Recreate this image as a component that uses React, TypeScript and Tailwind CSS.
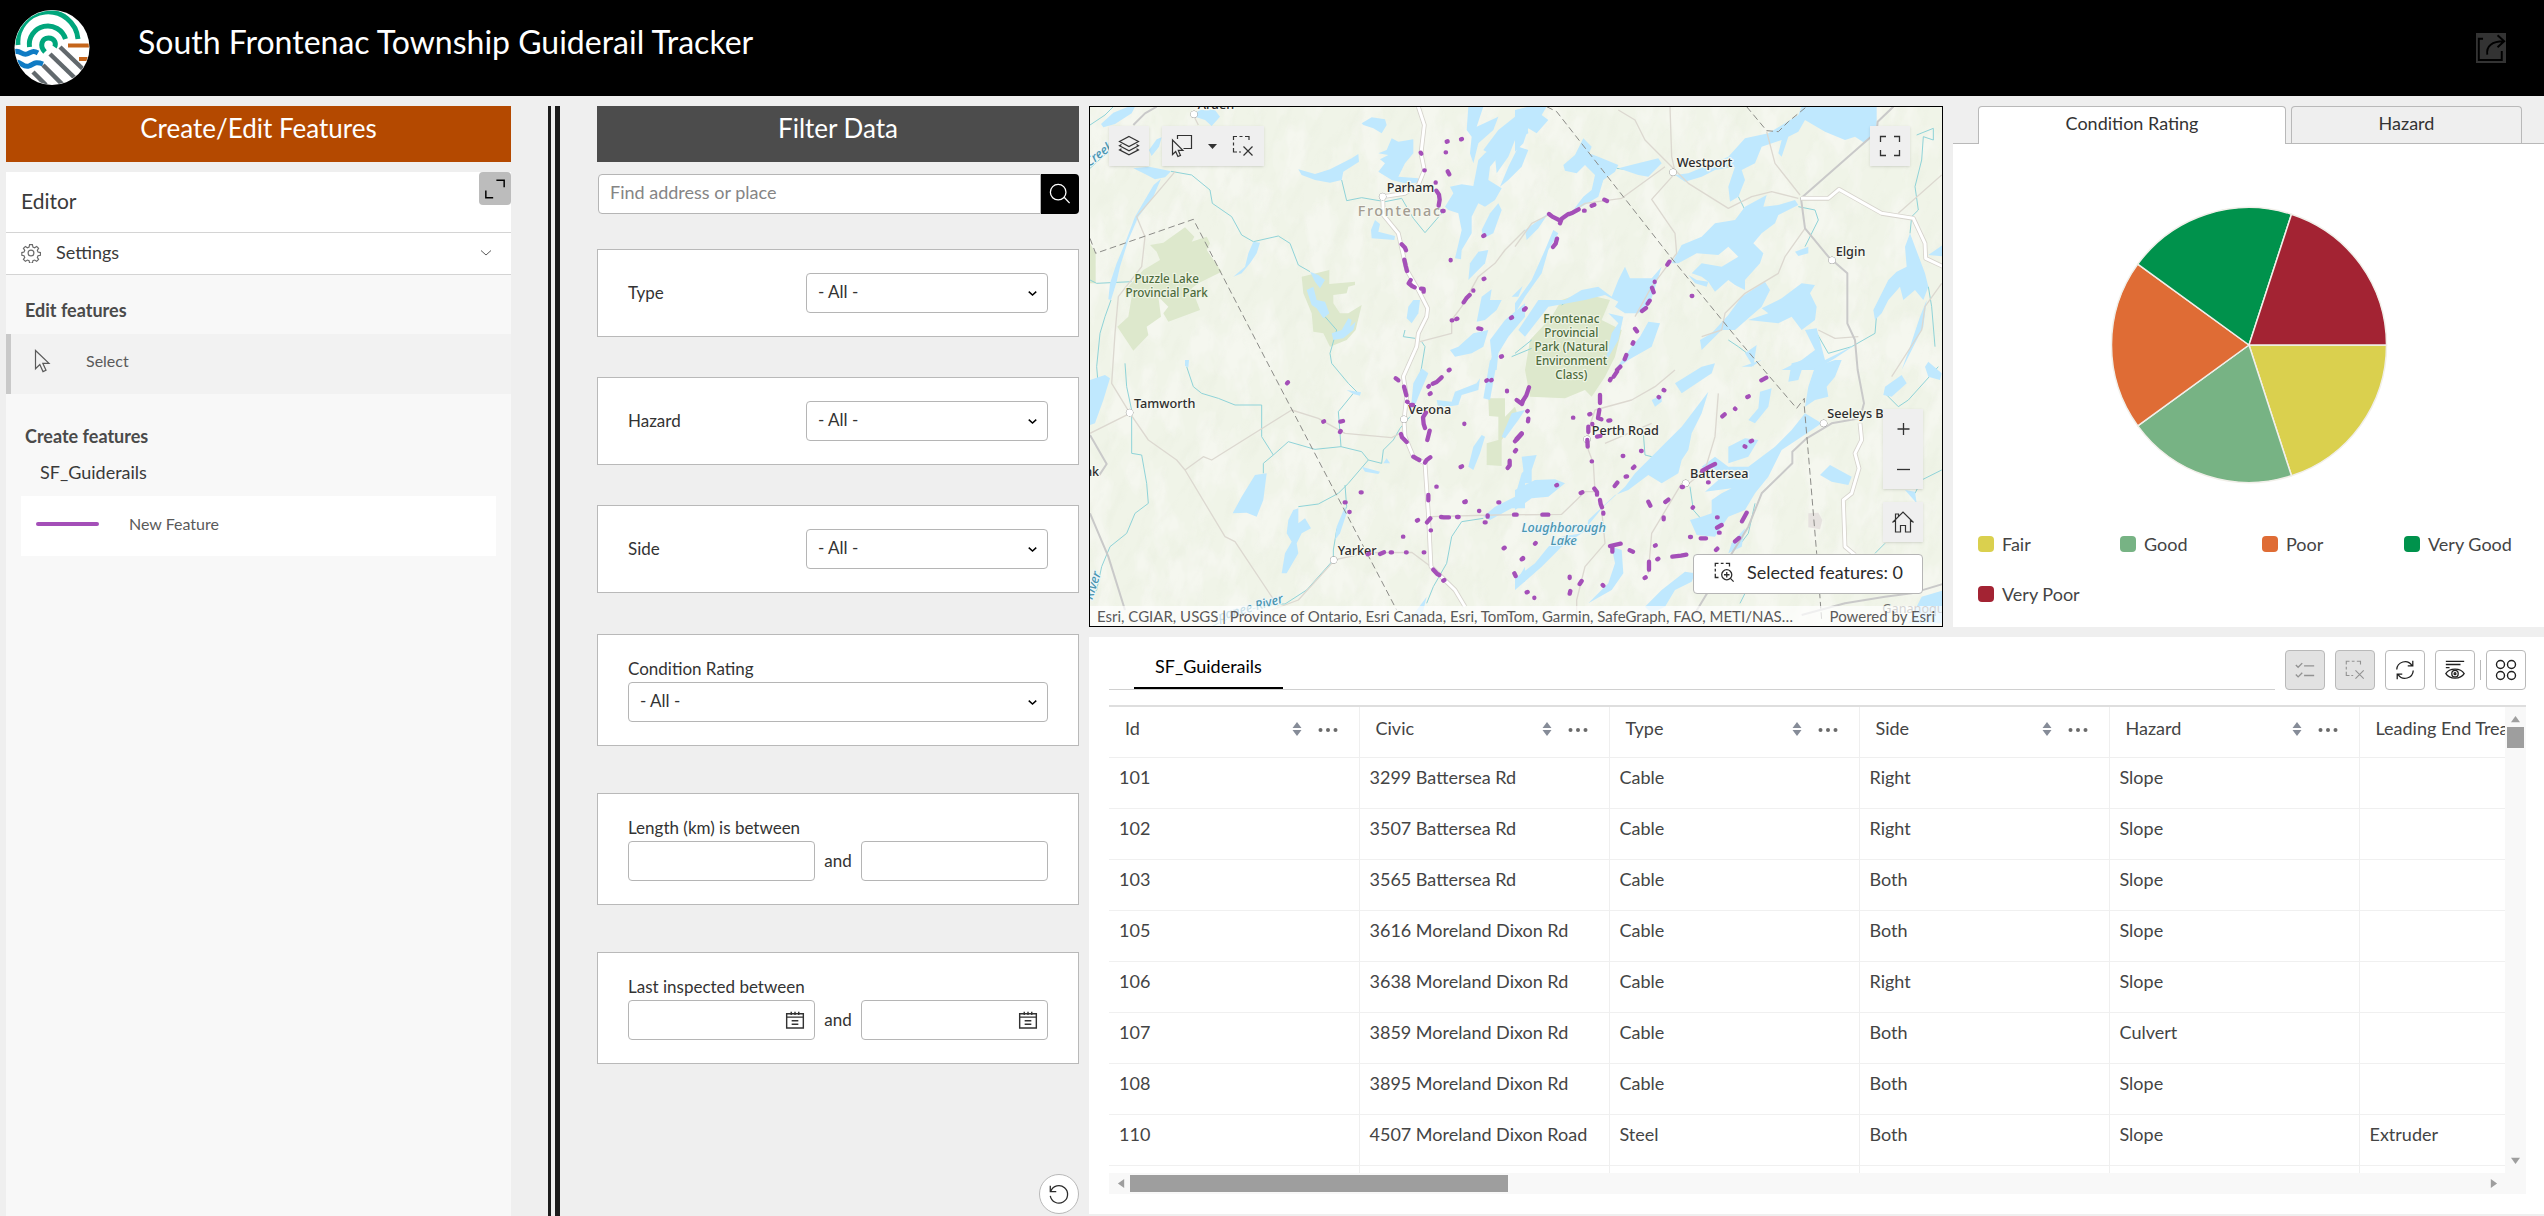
import React from "react";

/* ---------- icons ---------- */

type IconProps = { className?: string };

function Stroke({ className, children, width = 1 }: IconProps & { children: React.ReactNode; width?: number }) {
  return (
    <svg viewBox="0 0 24 24" className={className} fill="none" stroke="currentColor" strokeWidth={width} aria-hidden="true">
      {children}
    </svg>
  );
}

function Logo({ className }: IconProps) {
  return (
    <svg viewBox="14 9 76 75" className={className} role="img" aria-label="South Frontenac logo">
      <defs>
        <clipPath id="logo-clip">
          <circle cx="52" cy="46.5" r="37" />
        </clipPath>
      </defs>
      <circle cx="52" cy="46.5" r="37.5" fill="#fff" />
      <g clipPath="url(#logo-clip)" fill="none">
        <g stroke="#00a67c" strokeWidth="5">
          <path d="M18 44a30 30 0 0 1 60-6" />
          <path d="M29.500 46a18.500 18.500 0 0 1 36-8" />
          <path d="M45 51c-6-6-3-14 3.500-14s8 6 6 9" />
        </g>
        <g stroke="#c5651b" strokeWidth="4">
          <path d="M68 44.500h24" />
          <path d="M79 58h12" />
        </g>
        <g stroke="#0f7bc4" strokeWidth="5">
          <path d="M14 51c6-3 8 4 13 2s6-4 11-1" />
          <path d="M17 61c5 1 7 6 12 4s6-5 14-2" />
        </g>
        <g stroke="#62696d" strokeWidth="4.500">
          <path d="M60 46l26 25" />
          <path d="M50 53l28 27" />
          <path d="M43 64l22 22" />
          <path d="M33 71l13 13" />
        </g>
      </g>
    </svg>
  );
}

const LayersIcon = ({ className }: IconProps) => (
  <Stroke className={className} width={1.200}>
    <path d="M12 2.500l9.500 5-9.500 5-9.500-5z" />
    <path d="M4.500 10.500l-2 1.200 9.500 5 9.500-5-2-1.200" />
    <path d="M4.500 14.700l-2 1.200 9.500 5 9.500-5-2-1.200" />
  </Stroke>
);

const SelectRectIcon = ({ className }: IconProps) => (
  <Stroke className={className} width={1.200}>
    <path d="M7.500 5V1.500h14v13h-8" />
    <path d="M2.500 6v14.500l3.200-3 2.200 5 2.600-1.100-2.200-5h4.600z" />
  </Stroke>
);

const ClearSelectionIcon = ({ className }: IconProps) => (
  <Stroke className={className} width={1.200}>
    <path d="M2.500 6V2.500H6M8.500 2.500h3M14 2.500h4V6M2.500 8.500v3M2.500 14v4H6M8 18h2" />
    <path d="M12.500 12.500l9 9M21.500 12.500l-9 9" />
  </Stroke>
);

const ZoomSelectionIcon = ({ className }: IconProps) => (
  <Stroke className={className} width={1.400}>
    <path d="M2.500 6V2.500H6M8.500 2.500h3M14 2.500h4V6M2.500 8.500v3M2.500 14v4H6" />
    <circle cx="15" cy="15" r="5.500" />
    <path d="M15 12v6M12 15h6M19 19l3.500 3.500" />
  </Stroke>
);

const CursorIcon = ({ className }: IconProps) => (
  <Stroke className={className} width={1.200}>
    <path d="M5.500 1.500v18.300l4.300-4.200 3.200 7 3-1.300-3.200-7H19z" />
  </Stroke>
);

const GearIcon = ({ className }: IconProps) => (
  <Stroke className={className} width={1.400}>
    <circle cx="12" cy="12" r="3.500" />
    <path d="M10.300 2h3.400l.6 2.800 2 .9 2.500-1.600 2.300 2.400-1.500 2.400.8 2 2.900.6v3.200l-2.900.6-.8 2 1.500 2.400-2.300 2.300-2.500-1.500-2 .8-.6 2.900h-3.400l-.6-2.900-2-.8-2.400 1.500-2.400-2.300 1.600-2.400-.9-2L1 14.700v-3.200l2.600-.6.9-2-1.600-2.400 2.400-2.400 2.400 1.600 2-.9z" />
  </Stroke>
);

const CalendarIcon = ({ className }: IconProps) => (
  <Stroke className={className} width={1.700}>
    <path d="M2 4.500h20v17H2zM2 8.500h20M7.500 2v4M12 2v4M16.500 2v4M8 13h8M8 17h8" />
  </Stroke>
);

const ResetIcon = ({ className }: IconProps) => (
  <Stroke className={className} width={1.400}>
    <path d="M2.500 3v6.500H9" />
    <path d="M3 9a9.500 9.500 0 1 1-.5 5" />
  </Stroke>
);

const RefreshIcon = ({ className }: IconProps) => (
  <Stroke className={className} width={1.400}>
    <path d="M3 11.500A9 9 0 0 1 19.500 7M20.500 2v5.500H15" />
    <path d="M21 12.500A9 9 0 0 1 4.500 17M3.500 22v-5.500H9" />
  </Stroke>
);

const ShowFieldsIcon = ({ className }: IconProps) => (
  <Stroke className={className} width={1.400}>
    <path d="M2 2.500h20M2 6h16M2 9.500h4" />
    <path d="M2 16c4-6.500 16-6.500 20 0-4 6.500-16 6.500-20 0z" />
    <circle cx="12" cy="16" r="3.500" />
    <circle cx="12" cy="16" r="1" />
  </Stroke>
);

const GridIcon = ({ className }: IconProps) => (
  <Stroke className={className} width={1.400}>
    <circle cx="6.500" cy="6.500" r="4" />
    <circle cx="17.500" cy="6.500" r="4" />
    <circle cx="6.500" cy="17.500" r="4" />
    <circle cx="17.500" cy="17.500" r="4" />
  </Stroke>
);

const ChecklistIcon = ({ className }: IconProps) => (
  <Stroke className={className} width={1.500}>
    <path d="M2 6.500l2.500 2.500L9 4.500M11 7.500h11M2 17l2.500 2.500L9 15M11 18h11" />
  </Stroke>
);

const HomeIcon = ({ className }: IconProps) => (
  <Stroke className={className} width={1.200}>
    <path d="M1.500 12.500L12 2l10.500 10.500M4.500 9.800v12.200h5v-6.500h5V22h5V9.800M4.500 9V4h3v2.500" />
  </Stroke>
);

const SearchIcon = ({ className }: IconProps) => (
  <Stroke className={className} width={1.400}>
    <circle cx="10" cy="10" r="8.500" />
    <path d="M16.500 15.500l6 6.500" />
  </Stroke>
);

const ShareIcon = ({ className }: IconProps) => (
  <Stroke className={className} width={1.600}>
    <path d="M5 4H1.500v17.500h19V14" />
    <path d="M8.500 17c-1-7 4-11 13.500-11M17 1l5.500 5-5.500 5" />
  </Stroke>
);

const ChevronDown = ({ className, width = 2 }: IconProps & { width?: number }) => (
  <Stroke className={className} width={width}>
    <path d="M2 7l10 9 10-9" />
  </Stroke>
);

/* ---------- map ---------- */

const lakesNW = [
  "M48 72L85 38L130 20L150 20L140 40L90 72L55 82Z",
  "M325 42L345 30L390 30L405 50L380 78L360 60L335 52Z",
  "M192 150L215 118L230 112L222 140L200 168Z",
  "M145 205L192 200L230 208L258 214L240 232L210 238L180 222Z",
  "M206 255L228 236L205 290L160 350L130 420L105 500L95 545L78 600L70 598L75 550L95 490L120 430L150 350Z",
  "M505 425L525 428L515 460L495 490L470 520L445 530L480 500L490 460Z",
  "M640 208L690 222L735 208L800 175L820 162L822 185L775 215L770 240L735 248L690 240L650 225Z",
  "M830 70L860 52L900 58L905 75L890 100L865 85L835 75Z",
  "M880 160L905 150L920 115L940 125L985 118L985 160L960 190L940 230L1000 235L1000 248L960 250L920 240L880 215L900 190L885 178L910 165Z",
  "M870 360L885 372L880 395L930 408L928 420L860 415L858 390Z",
  "M1080 320L1105 280L1095 260L1130 253L1165 258L1180 180L1200 160L1240 130L1240 170L1215 200L1210 240L1250 265L1230 300L1200 320L1180 310L1160 350L1160 400L1130 450L1128 478L1110 475L1130 390L1120 340L1090 330Z",
  "M1150 20L1195 20L1175 80L1240 50L1225 90L1180 130L1165 190L1155 160L1160 110L1145 90Z",
  "M1195 150L1240 90L1290 50L1320 35L1330 100L1290 120L1270 170L1235 220L1230 170Z",
  "M1270 200L1300 140L1330 150L1310 200L1270 240L1245 260Z",
  "M1215 340L1240 310L1250 330L1225 400L1195 415L1190 390Z",
  "M1155 490L1180 455L1210 450L1200 490L1170 520L1150 540Z",
  "M985 600L1005 600L1000 640L980 670L965 655L970 620Z",
  "M1180 640L1190 590L1220 568L1215 600L1250 600L1235 630L1200 660L1175 665Z",
  "M1280 590L1313 558L1300 590Z",
  "M1120 740L1165 700L1210 690L1195 740L1160 760L1110 770L1095 750Z",
  "M1215 720L1260 660L1320 610L1320 650L1270 710L1240 760L1235 810L1210 810L1220 770Z",
  "M675 515L700 525L720 540L705 565L690 545Z",
  "M665 570L685 560L695 600L720 605L733 640L715 655L695 625L680 615Z",
  "M740 700L770 690L790 655L800 660L795 680L812 665L805 690L775 715L745 720Z",
];
const lakesNE = [
  "M0 30L40 20L95 20L80 45L100 60L65 100L40 85L25 130L0 155Z",
  "M145 195L180 165L205 115L230 140L222 160L250 170L310 195L300 215L265 240L250 290L200 320L175 330L205 290L230 270L240 225L210 195L185 220L150 212Z",
  "M310 205L360 192L430 175L440 190L400 230L370 225Z",
  "M480 225L520 220L640 170L690 115L760 100L850 45L860 20L1085 20L1085 100L1050 130L1020 110L990 120L930 95L870 60L850 95L820 110L800 170L790 160L800 120L740 140L720 190L680 210L690 240L670 290L645 305L640 260L660 200L600 210L560 230L510 245Z",
  "M470 490L500 435L560 410L600 370L660 360L690 320L755 285L745 320L790 315L840 300L850 315L790 345L780 370L740 400L715 430L745 460L735 490L690 540L690 570L660 555L640 540L600 575L580 545L560 530L530 520L560 490L620 500L670 470L640 440L610 465L545 460L490 490Z",
  "M840 455L880 440L880 460L850 468Z",
  "M680 590L750 545L765 570L740 620L700 655L660 690L620 690L590 720L560 750L555 720L590 700L640 645Z",
  "M740 625L800 595L860 550L900 555L885 580L905 620L900 660L860 690L830 650L790 670L700 660L760 640Z",
  "M1170 440L1185 400L1200 440L1230 520L1240 560L1225 600L1200 570L1165 600L1155 560L1120 600L1100 640L1080 660L1075 630L1120 540L1145 515L1175 500Z",
  "M1240 465L1290 430L1290 470Z",
  "M1235 600L1225 680L1195 740L1160 810L1185 740L1215 650Z",
  "M115 390L130 400L100 450L80 520L30 590L0 640L0 610L50 540L90 450Z",
  "M290 590L310 540L330 500L345 535L410 535L440 500L405 610L370 640L330 640L300 620L310 605L270 585L210 600L100 620L30 710L10 690L70 600L150 600L200 570L250 560Z",
  "M280 640L325 650L310 720L270 790L290 700L310 670Z",
  "M375 710L400 665L435 670L410 740L340 780L300 810L350 740Z",
  "M30 390L100 340L70 385L35 420Z",
  "M870 690L905 685L930 780L1020 735L960 775L900 810L800 810L860 780L900 750Z",
  "M690 760L725 735L715 800Z",
  "M520 525L545 540L580 545L575 560L540 550Z",
];
const lakesSW = [
  "M15 60L60 45L75 55L55 120L30 190L15 195Z",
  "M510 345L545 340L535 420L515 470L485 458L443 460L470 410Z",
  "M625 450L640 445L640 490L660 475L678 505L650 520L635 550L640 580L605 640L590 640L600 580L620 545L605 520L610 480Z",
  "M785 90L828 97L825 107L805 102Z",
  "M300 0L312 0L310 22L300 18Z",
  "M975 170L985 70L1010 25L1030 40L1000 110L985 150Z",
  "M1055 120L1100 125L1110 95L1175 70L1185 55L1180 90L1130 105L1120 135L1060 145Z",
  "M1165 330L1150 320L1165 260L1190 225L1200 230L1185 280Z",
  "M1215 0L1235 10L1215 120L1195 115Z",
  "M1195 470L1230 440L1290 410L1310 340L1320 330L1320 445L1280 445L1215 480Z",
  "M1250 230L1280 160L1320 150L1300 180L1260 235Z",
  "M830 320L885 335L880 342L840 335Z",
  "M895 310L905 295L915 310Z",
  "M980 770L1025 710L1010 770Z",
  "M755 500L780 440L785 460L765 520L750 540Z",
  "M1290 670L1320 620L1320 665Z",
];
const lakesSE = [
  "M0 390L60 360L120 358L150 370L100 410L50 415L0 450Z",
  "M20 290L65 285L50 330L50 370L30 370Z",
  "M0 655L60 610L100 560L140 530L200 520L265 440L330 380L360 340L400 300L450 250L500 200L580 95L560 160L530 220L520 270L500 300L490 340L440 370L400 345L340 390L300 405L220 480L215 510L140 560L80 620L0 690Z",
  "M480 70L560 20L600 10L590 40L500 100Z",
  "M560 320L600 290L640 320L700 320L740 290L780 260L830 210L870 160L920 190L860 230L800 270L760 350L720 400L690 450L640 470L600 530L545 525L525 480L560 470L590 460L590 420L620 400L650 385L570 395L610 360Z",
  "M640 260L690 235L730 240L700 290L640 310Z",
  "M730 145L735 95L770 85L760 140L720 190L700 180Z",
  "M870 140L880 80L900 20L960 0L980 0L960 50L935 80L940 110L900 120Z",
  "M820 65L830 10L870 0L850 60Z",
  "M915 345L945 315L1010 350L1000 375L950 365Z",
  "M1110 80L1160 45L1175 70L1130 110L1105 105Z",
  "M1230 20L1240 5L1280 40L1275 60L1240 50Z",
  "M290 560L320 570L325 640L290 690L220 730L280 670L300 610Z",
  "M410 760L390 740L440 690L510 635L540 640L530 665L480 690L450 740Z",
  "M1170 390L1200 395L1205 430Z",
  "M650 550L690 505L680 560L640 580Z",
  "M1290 690L1220 710L1180 790L1290 790Z",
  "M680 20L740 0L710 20Z",
  "M410 120L440 105L440 125L420 140Z",
];

const parks = [
  "M195 435L235 428L300 382L328 410L320 425L365 410L375 430L365 450L410 515L340 550L320 565L345 630L250 665L235 640L250 620L220 590L228 650L185 680L190 705L145 752L97 680L130 650L140 590L130 560L175 510L225 480L215 455Z",
  "M15 430L32 460L32 550L15 550Z",
  "M650 530L733 510L733 552L810 545L810 555L790 560L785 580L745 585L745 610L765 640L790 640L830 615L812 690L785 720L735 740L715 700L685 695L680 640L655 580Z",
  "M1335 720L1400 650L1430 600L1490 580L1575 600L1550 660L1610 690L1590 770L1560 830L1520 890L1500 870L1440 895L1335 890L1320 810Z",
  "M1210 895L1260 895L1260 950L1290 920L1300 950L1250 1020L1250 1098L1205 1095L1205 1030L1240 1020L1240 950L1212 948Z",
];

const streams = [
  "M15 205L70 155M15 75L60 45L85 20",
  "M258 214L320 225L375 270L382 310L440 350L470 405L505 425L580 408L615 430L640 495L675 515",
  "M770 240L785 302L830 293L900 305L950 295L985 355L1020 398L1070 340L1060 310",
  "M78 600L60 650L45 700L35 800L40 860M15 540L35 550L140 545",
  "M720 650L755 690L735 760L740 790L790 850L820 880M805 880L760 935L768 1040L690 1048L610 1025L565 1065L535 1090L535 1120",
  "M305 800L325 860L350 880L400 895L450 915L530 915L530 1010L565 1065",
  "M768 1040L830 1055L850 1080L890 1090L895 1050L925 1020L945 985L975 950",
  "M850 1080L790 1150L760 1180L700 1212L640 1220M780 1155L785 1220L755 1290L745 1350L745 1380L665 1470L600 1512L560 1512L470 1535L380 1580",
  "M1005 830L1020 740L1010 725M960 690L955 710L990 715",
  "M120 790L125 860L140 930L140 1060L170 1065L185 1150L190 1210L150 1240L125 1300L75 1340L50 1400L35 1470L15 1490",
  "M1195 1255L1130 1265L1100 1310L1085 1390L1045 1460L1025 1510",
  "M2495 105L2545 85L2545 120L2515 110L2510 180L2490 260L2500 330L2480 350L2475 400",
  "M1595 205L1640 210L1680 195M1960 290L1980 330L2010 310M2140 320L2190 330L2200 360L2160 440",
  "M2190 690L2230 760L2300 740L2370 700L2375 640M2400 880L2440 920L2470 900L2560 800",
  "M1290 760L1340 720M1430 615L1480 580M1675 1000L1680 1065L1700 1070M1815 1160L1825 1230L1860 1270",
  "M1930 720L1960 740L2000 770M2570 1110L2510 1140L2490 1180M2400 1330L2370 1360M1980 1480L1965 1510M2010 1210L1990 1300L1960 1340",
  "M2530 560L2540 620L2550 740M1280 770L1340 745",
];

const minorRoads = [
  "M325 45L340 75M270 215L215 280L155 350L180 410L170 500L100 590L90 700L80 850L135 940L190 1020L275 1080L300 1110L420 1310L450 1325L580 1520",
  "M300 1110L355 1070L380 1080L620 930L700 955L780 1000L920 1013L945 1000",
  "M15 1000L135 940M745 1380L850 1358L980 1357L1038 1400M745 1385L640 1500L560 1530",
  "M1320 390L1260 450L1230 490L1180 530L1130 620L1100 660L1100 700L1005 725",
  "M1038 1250L1230 1245L1430 1243L1500 1175L1530 1175L1525 1090L1510 1050L1510 990L1530 930L1640 900L1710 860L1770 810",
  "M1600 30L1650 60L1680 120L1730 170L1810 250L1930 325L2000 290L2060 275L2140 295",
  "M1755 20L1760 170L1770 215M1770 220L1700 298L1770 400L1775 460L1700 560L1650 650",
  "M1420 360L1500 310L1610 295L1740 200M1290 440L1340 370L1390 345",
  "M2045 95L2070 190L2145 285M2160 385L2100 470L2080 520L1980 580L1920 640L1910 690L1850 710",
  "M1700 970L1560 1030M1790 1150L1700 1300L1690 1420M1900 880L1890 1010L1860 1110L1800 1160",
  "M1550 1230L1560 1330L1500 1400L1475 1500L1475 1560M2440 340L2570 225M2570 550L2520 620L2510 690L2420 830",
  "M2200 690L2250 715L2320 710",
];
const greyRoads = [
  "M2425 20L2378 65L2375 95L2148 295L2160 385L2230 470L2287 520L2287 670L2310 720L2318 810L2337 910L2325 955L2240 970L2165 1015L2122 1055L2122 1090L2030 1180L1990 1280L1860 1490L1830 1540",
  "M15 1005L65 1092L40 1130M15 1240L70 1370L120 1530",
  "M145 75L180 40L215 20",
  "M2150 1545L2280 1510L2400 1490L2480 1480L2580 1450",
];
const whiteRoads = [
  "M1000 20L1018 75L1008 160L1018 210L1000 255L960 280L893 290L895 345L940 400L965 510L1000 570L1028 625L1025 650L1000 700L995 740L955 830L965 890L957 960L960 1010L985 1070L1020 1090L1030 1240L1038 1400L1110 1470L1140 1520",
  "M2148 295L2230 295L2262 268L2390 340L2485 355L2520 430L2522 475L2575 500",
  "M2325 970L2330 1020L2310 1060L2322 1105L2300 1180L2275 1200L2280 1340L2310 1365",
];
const boundaries = [
  "M15 415L32 460L325 358L543 780L935 1530",
  "M1385 20L1415 35L1760 475L1960 720L2135 925L2158 895L2158 920L2175 1120L2195 1360L2210 1560",
  "M1985 20L2045 92L2080 95L2110 65L2165 20",
];

const guiderails = [
  "M1085 125l3-1M1128 118l3-1M1082 157h1M1007 158l2 3M1018 211h1M1088 214l5 9M1052 247v1M1054 272l8 12l2 15l-3 18M1072 333h4",
  "M1195 408l3-2M950 433l10 10l3 8M958 479l4 18l4 16M977 540l-6 10l10 8l8 4M1008 566l8 1l0 8M1097 480v1M1196 537l2-1M1165 571v1M1154 585l-10 10l-8 12M1100 661h2M1114 657l3-1M1180 685l9 2M1278 654l3-2M1317 629h1M1248 770l3-1",
  "M1392 342l10 8l20 10M1425 370l5-14l20-14M1453 342l10-4l18-10M1497 332h2M1520 317l8-3M1558 299l8 4M1416 416l-4 15l-8 10M1753 485l-6 9M1709 545v1M1701 563l5 14M1694 602l-6 9M1683 624l-12 9M1820 588h2M1650 686l6 8M1645 727l-2 4M1624 765l-5 13M1606 800l-10 10M1320 627l2-2",
  "M606 850l3-3M1091 811l3-2M932 835l8 6M957 860l5 18l2 8M966 905l2 1M978 915h6M1070 832l-15 14l-12 5M1030 860l2-2M1034 882l3-2M1204 842l2-1M1218 841l2-1M1266 872v2",
  "M1023 938l-9 14l2 20l4 12M1034 992l-7 28M1138 971v1M948 1002l3 10l14 14M985 1070l10 6l8 4M1020 1088l5-8l11-8M715 965l2-1M766 965l8-2M765 996l2-3M827 1177h3M779 1207h3M793 1236h1M1127 1101l4-2M1055 1160h-1M1030 1185v16M1138 1206l4-2M996 1262l3-2M1036 1255l-10 12M1068 1251l8 1h16M1116 1251h5M1182 1233h1M1208 1246v4M1199 1267h3M1240 1207h3M1287 1244h8M1037 1291h1M954 1310h1M848 1363l4-2M885 1362l12-5M917 1357h4M963 1357h2M1016 1357h2M1045 1409l12 13l6 3M1075 1442l3-2M1256 1345l3-2M1310 1378l4-2M1288 1420l4 8M1295 900l16 12l3-10M1310 1002l-12 14l-8 8M1290 1054l3-4M1274 1082v14l-6 8M1141 1206h1",
  "M1332 862l-8 24l-10 16M1328 933l-1 1M1330 956l-1 8M1310 1000l-15 16M1545 885v24M1543 930l-4 24l10 4M1516 942l-3 1M1464 953h1M1570 962l6-1M1522 972v1M1510 980l0 16M1536 1010l10-2M1507 1020l1 20M1520 1084h1M1613 1068h2M1668 1053h2M1648 1100l-4 4M1626 1129l-4 1M1597 1148l-8 10M1414 1156l2-1M1492 1177l-5 2M1528 1166l8 10l0 8M1545 1200l2 12l4 10M1555 1238v3M1372 1244h18",
  "M1722 892l-1-1M1738 871l-2-1M1596 815l-10 15M1577 837l-2 4M2044 833l-15 8M1991 889l-4 2M1951 927l-1-1M1919 943l-7 6M2001 1022l-4 2M1981 1040l-2-1M1890 1092l-16 8l-22 12M1869 1147h2M1790 1161h4M1690 1205l6 12M1750 1199l-9 7M1736 1252v6M1824 1222l-1 1M1898 1252h-2M1910 1275l-14 8M1904 1298h-2M1985 1238l-14 26M1962 1314l-12 10M1815 1311h3M1847 1315h16M1897 1346l-4 4M1762 1370l26-3l16-3M1712 1336l-2 1M1720 1376l-3 2M1692 1385v24M1682 1432l-3 2M1575 1338l32-7M1582 1340v15M1634 1351l10 4M1350 1331l2-2M1312 1376l2-2M1454 1430v4M1490 1443l-6 9M1456 1473l-2 8M1553 1455l2 2M1325 1477l3-1M1348 1493v1",
];

const places = [
  { name: "Arden", x: 338, y: 28, dot: [327, 43] },
  { name: "Parham", x: 905, y: 276, dot: [893, 290] },
  { name: "Westport", x: 1775, y: 202, dot: [1764, 217] },
  { name: "Elgin", x: 2252, y: 467, dot: [2241, 481] },
  { name: "Tamworth", x: 147, y: 924, dot: [134, 938] },
  { name: "Verona", x: 970, y: 943, dot: [957, 958] },
  { name: "Yarker", x: 758, y: 1365, dot: [746, 1380] },
  { name: "Perth Road", x: 1520, y: 1004, dot: [1506, 1018] },
  { name: "Battersea", x: 1815, y: 1135, dot: [1802, 1150] },
  { name: "Seeleys Bay", x: 2227, y: 955, dot: [2216, 970] },
];

function BaseMap() {
  return (
    <svg
      viewBox="15 21 2556 1557"
      preserveAspectRatio="xMinYMin slice"
      className="absolute inset-0 size-full"
      style={{ fontFamily: '"Noto Sans", sans-serif' }}
      role="img"
      aria-label="Map of guiderails in South Frontenac"
    >
      <defs>
        <filter id="relief" x="0" y="0" width="100%" height="100%">
          <feTurbulence type="fractalNoise" baseFrequency="0.012 0.006" numOctaves="4" seed="8" />
          <feColorMatrix values="0 0 0 0 0.98  0 0 0 0 0.97  0 0 0 0 0.96  0 0 0 5 -2.300" />
        </filter>
        <filter id="shade" x="0" y="0" width="100%" height="100%">
          <feTurbulence type="fractalNoise" baseFrequency="0.03 0.010" numOctaves="3" seed="3" />
          <feColorMatrix values="0 0 0 0 0.55  0 0 0 0 0.62  0 0 0 0 0.45  0 0 0 1.500 -0.750" />
        </filter>
      </defs>
      <rect x="15" y="21" width="2700" height="1700" fill="#f0f4e8" />
      <rect x="15" y="21" width="2700" height="1700" filter="url(#relief)" opacity="0.4" />
      <g transform="rotate(25 1293 800)">
        <rect x="-300" y="-700" width="3200" height="3000" filter="url(#shade)" opacity="0.12" />
      </g>
      <g fill="#dde8cc">
        {parks.map((d) => (
          <path key={d} d={d} />
        ))}
      </g>
      <path d="M2170 1240L2200 1238L2212 1260L2205 1288L2170 1282Z" fill="#e6e2df" />
      <g fill="none" stroke="#8fd3d8" strokeWidth="3">
        {streams.map((d) => (
          <path key={d} d={d} />
        ))}
      </g>
      <g fill="#bfe8fe">
        {lakesNW.map((d) => (
          <path key={d} d={d} />
        ))}
        <g transform="translate(1290 0)">
          {lakesNE.map((d) => (
            <path key={d} d={d} />
          ))}
        </g>
        <g transform="translate(0 780)">
          {lakesSW.map((d) => (
            <path key={d} d={d} />
          ))}
        </g>
        <g transform="translate(1290 780)">
          {lakesSE.map((d) => (
            <path key={d} d={d} />
          ))}
        </g>
      </g>
      <g fill="none" strokeLinejoin="round">
        <g stroke="#dcd8d0" strokeWidth="4">
          {minorRoads.map((d) => (
            <path key={d} d={d} />
          ))}
        </g>
        <g stroke="#c9c9c9" strokeWidth="6">
          {greyRoads.map((d) => (
            <path key={d} d={d} />
          ))}
        </g>
        <g stroke="#d6d3cc" strokeWidth="14">
          {whiteRoads.map((d) => (
            <path key={d} d={d} />
          ))}
        </g>
        <g stroke="#ffffff" strokeWidth="9">
          {whiteRoads.map((d) => (
            <path key={d} d={d} />
          ))}
        </g>
        <g stroke="#8c8c88" strokeWidth="3" strokeDasharray="20 11">
          {boundaries.map((d) => (
            <path key={d} d={d} />
          ))}
        </g>
      </g>
      <g fontSize="38" fill="#2e2e2e" stroke="#f6f8f0" strokeWidth="8" paintOrder="stroke" strokeLinejoin="round">
        {places.map((p) => (
          <g key={p.name}>
            <circle cx={p.dot[0]} cy={p.dot[1]} r="10" fill="#fff" stroke="#8a8a8a" strokeWidth="3" />
            <text x={p.x} y={p.y} fontWeight="500">
              {p.name}
            </text>
          </g>
        ))}
        <text x="20" y="1128" textAnchor="middle" fontWeight="500">nk</text>
      </g>
      <g fontSize="35" fill="#4d6b3c" stroke="#eef4e4" strokeWidth="7" paintOrder="stroke" strokeLinejoin="round" textAnchor="middle" fontWeight="500">
        <text x="245" y="550">Puzzle Lake</text>
        <text x="245" y="592">Provincial Park</text>
        <text x="1459" y="669">Frontenac</text>
        <text x="1459" y="711">Provincial</text>
        <text x="1459" y="753">Park (Natural</text>
        <text x="1459" y="795">Environment</text>
        <text x="1459" y="836">Class)</text>
      </g>
      <g fontSize="38" fill="#4b95b0" stroke="#eaf6fa" strokeWidth="6" paintOrder="stroke" fontStyle="italic" textAnchor="middle" fontWeight="500">
        <text x="1436" y="1295">Loughborough</text>
        <text x="1436" y="1336">Lake</text>
        <text x="50" y="172" transform="rotate(-38 50 172)">Creek</text>
        <text x="35" y="1460" transform="rotate(-72 35 1460)">River</text>
        <text x="500" y="1535" transform="rotate(-16 500 1535)">panee River</text>
      </g>
      <text x="818" y="347" fontSize="43" fill="#a39d92" stroke="#f6f8f0" strokeWidth="6" paintOrder="stroke" letterSpacing="5" fontWeight="500">
        Frontenac
      </text>
      <text x="2392" y="1540" fontSize="38" fill="#6b6b6b">
        Gananoque
      </text>
      <g fill="none" stroke="#a44fb8" strokeWidth="13" strokeLinecap="round" strokeLinejoin="round">
        {guiderails.map((d) => (
          <path key={d} d={d} />
        ))}
      </g>
    </svg>
  );
}

const mapButton = "flex h-10 w-10 items-center justify-center bg-[#efefef] text-[#323232]";

function MapView() {
  return (
    <section aria-label="Map" className="relative min-w-0 flex-1 overflow-hidden border border-black">
      <BaseMap />
      <div className="absolute left-[19px] top-[19px] flex gap-[13px]">
        <button aria-label="Layers" className={`${mapButton} shadow`}>
          <LayersIcon className="size-6" />
        </button>
        <div className="flex bg-[#efefef] pr-px shadow">
          <button aria-label="Select by rectangle" className={mapButton}>
            <SelectRectIcon className="size-6" />
          </button>
          <button aria-label="More selection tools" className="flex h-10 w-[21px] items-center justify-center text-[#323232]">
            <svg viewBox="0 0 9 5" className="h-[5px] w-[9px]" fill="currentColor" aria-hidden="true">
              <path d="M0 0h9L4.500 5z" />
            </svg>
          </button>
          <button aria-label="Clear selection" className={mapButton}>
            <ClearSelectionIcon className="size-6" />
          </button>
        </div>
      </div>
      <button aria-label="Full screen" className={`${mapButton} absolute right-8 top-[19px] shadow`}>
        <Stroke className="size-6" width={1.300}>
          <path d="M2.500 8V2.500H8M16 2.500h5.500V8M21.500 16v5.500H16M8 21.500H2.500V16" />
        </Stroke>
      </button>
      <div className="absolute right-[19px] top-[302px] flex flex-col gap-[13px]">
        <div className="flex flex-col shadow">
          <button aria-label="Zoom in" className={mapButton}>
            <Stroke className="size-6" width={1.300}>
              <path d="M6.500 12h12M12.500 6v12" />
            </Stroke>
          </button>
          <button aria-label="Zoom out" className={mapButton}>
            <Stroke className="size-6" width={1.300}>
              <path d="M6 12.500h13" />
            </Stroke>
          </button>
        </div>
        <button aria-label="Default extent" className={`${mapButton} shadow`}>
          <HomeIcon className="size-6" />
        </button>
      </div>
      <button className="absolute bottom-8 right-[19px] flex h-10 items-center gap-3 rounded-sm border border-[#b5b5b5] bg-white px-[19px] pb-1 text-[18px] text-[#2b2b2b]">
        <ZoomSelectionIcon className="size-[22px]" />
        Selected features: 0
      </button>
      <footer className="absolute inset-x-0 bottom-0 flex h-5 items-center justify-between gap-1 bg-white/70 px-[7px] text-[15px] leading-4 text-[#5a5a5a]">
        <span className="truncate">
          Esri, CGIAR, USGS | Province of Ontario, Esri Canada, Esri, TomTom, Garmin, SafeGraph, FAO, METI/NAS…
        </span>
        <a href="#esri" className="shrink-0">
          Powered by Esri
        </a>
      </footer>
    </section>
  );
}

/* ---------- editor ---------- */

function EditorPanel() {
  return (
    <aside className="flex w-[505px] shrink-0 flex-col">
      <h2 className="h-14 bg-[#b44900] text-center text-[26px] leading-11 text-white">Create/Edit Features</h2>
      <div className="mt-[10px] flex flex-1 flex-col bg-[#f8f8f8] text-[#3a3a3a]">
        <div className="relative flex h-[61px] items-center border-b border-[#d4d4d4] bg-white pb-0.5 pl-[15px] text-[21px]">
          <h3>Editor</h3>
          <button aria-label="Expand" className="absolute right-0 top-0 flex h-[33px] w-8 items-center justify-center rounded-sm bg-[#bcbcbc] text-black">
            <Stroke className="size-[22px]" width={1.600}>
              <path d="M13.500 2.500H22V10M2 13.500v8h8" />
            </Stroke>
          </button>
        </div>
        <button className="flex h-[42px] items-center border-b border-[#d4d4d4] bg-white pb-0.5 pl-[15px] pr-[19px] text-[18px]">
          <GearIcon className="size-5 text-[#6a6a6a]" />
          <span className="ml-[15px]">Settings</span>
          <ChevronDown className="ml-auto size-3 text-[#5a5a5a]" />
        </button>
        <h4 className="mt-[23px] pl-[19px] text-[18px] font-bold leading-6 text-[#4a4a4a]">Edit features</h4>
        <button className="mt-3 flex h-[60px] items-center border-l-[5px] border-[#c9c9c9] bg-[#f2f2f2] pb-1.5 pl-[19px] text-[16px] text-[#5a5a5a]">
          <CursorIcon className="size-6" />
          <span className="ml-8">Select</span>
        </button>
        <h4 className="mt-[30px] pl-[19px] text-[18px] font-bold leading-6 text-[#4a4a4a]">Create features</h4>
        <p className="mt-3 pl-[34px] text-[18px] leading-6">SF_Guiderails</p>
        <button className="mx-[15px] mt-3 flex h-[60px] items-center bg-white pb-1 pl-[15px] text-[16px] text-[#5a5a5a]">
          <span className="h-1 w-[63px] rounded-full bg-[#a44fb8]" />
          <span className="ml-[30px]">New Feature</span>
        </button>
      </div>
    </aside>
  );
}

/* ---------- filters ---------- */

const fieldBox = "h-10 w-full rounded-sm border border-[#b5b5b5] bg-white";
const cardBox = "border border-[#b9b9b9] bg-white px-[30px] text-[#333333]";

function AllSelect({ id }: { id: string }) {
  return (
    <div className="relative">
      <select id={id} className={`${fieldBox} appearance-none pb-0.5 pl-[11px] text-[17px] leading-5`} defaultValue="all">
        <option value="all">- All -</option>
      </select>
      <ChevronDown width={4} className="pointer-events-none absolute right-[11px] top-4 size-[9px] text-black" />
    </div>
  );
}

function InlineFilter({ label, id }: { label: string; id: string }) {
  return (
    <div className={`${cardBox} flex h-[88px] items-center text-[17px]`}>
      <label htmlFor={id} className="flex-1">
        {label}
      </label>
      <div className="w-[242px]">
        <AllSelect id={id} />
      </div>
    </div>
  );
}

function StackedFilter({ legend, children }: { legend: React.ReactNode; children: React.ReactNode }) {
  return (
    <div className={`${cardBox} h-[112px] pt-[23px] text-[17px]`}>
      <div className="h-6 leading-[22px]">{legend}</div>
      {children}
    </div>
  );
}

function DateField({ label }: { label: string }) {
  return (
    <div className="relative flex-1">
      <input type="text" aria-label={label} className={`${fieldBox} pl-3 pr-10`} />
      <button aria-label={`${label} calendar`} className="absolute right-2.5 top-2.5 text-[#323232]">
        <CalendarIcon className="size-5" />
      </button>
    </div>
  );
}

function FilterPanel() {
  return (
    <section className="flex w-[482px] shrink-0 flex-col pb-0.5">
      <h2 className="h-14 bg-[#4c4c4c] text-center text-[26px] leading-11 text-white">Filter Data</h2>
      <form className="ml-px mt-3 flex h-10" onSubmit={(e) => e.preventDefault()}>
        <input
          type="search"
          aria-label="Find address or place"
          placeholder="Find address or place"
          className="min-w-0 flex-1 rounded-l border border-[#b5b5b5] bg-white pb-1 pl-[11px] text-[18px] text-[#2b2b2b] placeholder:text-[#858585]"
        />
        <button aria-label="Search" className="flex w-[38px] items-center justify-center rounded-r-sm bg-black text-white">
          <SearchIcon className="size-[22px]" />
        </button>
      </form>
      <div className="mt-[35px] flex flex-col gap-10">
        <InlineFilter label="Type" id="filter-type" />
        <InlineFilter label="Hazard" id="filter-hazard" />
        <InlineFilter label="Side" id="filter-side" />
      </div>
      <div className="mt-[41px] flex flex-col gap-[47px]">
        <StackedFilter legend={<label htmlFor="filter-condition">Condition Rating</label>}>
          <AllSelect id="filter-condition" />
        </StackedFilter>
        <StackedFilter legend="Length (km) is between">
          <div className="flex items-center gap-[9px]">
            <input type="text" aria-label="Minimum length" className={`${fieldBox} min-w-0 flex-1 px-3`} />
            <span>and</span>
            <input type="text" aria-label="Maximum length" className={`${fieldBox} min-w-0 flex-1 px-3`} />
          </div>
        </StackedFilter>
        <StackedFilter legend="Last inspected between">
          <div className="flex items-center gap-[9px]">
            <DateField label="Inspected from" />
            <span>and</span>
            <DateField label="Inspected to" />
          </div>
        </StackedFilter>
      </div>
      <button aria-label="Reset filters" className="ml-auto mt-auto flex size-10 items-center justify-center rounded-full border border-[#b9b9b9] bg-white text-[#2b2b2b]">
        <ResetIcon className="size-[22px]" />
      </button>
    </section>
  );
}

/* ---------- chart ---------- */

const slices = [
  { name: "Fair", fill: "#dad04e", swatch: "bg-[#dad04e]" },
  { name: "Good", fill: "#77b384", swatch: "bg-[#77b384]" },
  { name: "Poor", fill: "#df6c35", swatch: "bg-[#df6c35]" },
  { name: "Very Good", fill: "#00924c", swatch: "bg-[#00924c]" },
  { name: "Very Poor", fill: "#a32333", swatch: "bg-[#a32333]" },
];

function slicePath(i: number) {
  const a = (i * 72 * Math.PI) / 180;
  const b = ((i + 1) * 72 * Math.PI) / 180;
  const p = (t: number) => `${140 + 137.5 * Math.cos(t)} ${140 + 137.5 * Math.sin(t)}`;
  return `M140 140L${p(a)}A137.500 137.500 0 0 1 ${p(b)}Z`;
}

function ChartPanel() {
  return (
    <section className="flex w-[591px] shrink-0 flex-col">
      <div role="tablist" className="flex h-[38px] gap-[5px] border-b border-[#b9b9b9] pl-[25px] pr-[22px] text-[18px] text-[#333333]">
        <button role="tab" aria-selected="true" className="-mb-px w-[308px] rounded-t-sm border border-b-0 border-[#b9b9b9] bg-white pb-1">
          Condition Rating
        </button>
        <button role="tab" aria-selected="false" className="flex-1 rounded-t-sm border border-b-0 border-[#b9b9b9] bg-[#efefef] pb-1">
          Hazard
        </button>
      </div>
      <div className="flex flex-1 flex-col bg-white">
        <svg viewBox="0 0 280 280" className="mx-auto mt-[61px] size-[280px]" role="img" aria-label="Condition rating pie chart">
          {slices.map((s, i) => (
            <path key={s.name} d={slicePath(i)} fill={s.fill} stroke="#f1efe9" strokeWidth="1.500" strokeLinejoin="round" />
          ))}
        </svg>
        <ul className="mt-[47px] grid grid-cols-[repeat(3,142px)_1fr] gap-y-[26px] pl-[25px] text-[18px] leading-6 text-[#444444]">
          {slices.map((s) => (
            <li key={s.name} className="flex items-center gap-2 whitespace-nowrap">
              <span className={`size-4 rounded-sm ${s.swatch}`} />
              {s.name}
            </li>
          ))}
        </ul>
      </div>
    </section>
  );
}

/* ---------- table ---------- */

const columns = ["Id", "Civic", "Type", "Side", "Hazard", "Leading End Treatment"];
const rows = [
  ["101", "3299 Battersea Rd", "Cable", "Right", "Slope", ""],
  ["102", "3507 Battersea Rd", "Cable", "Right", "Slope", ""],
  ["103", "3565 Battersea Rd", "Cable", "Both", "Slope", ""],
  ["105", "3616 Moreland Dixon Rd", "Cable", "Both", "Slope", ""],
  ["106", "3638 Moreland Dixon Rd", "Cable", "Right", "Slope", ""],
  ["107", "3859 Moreland Dixon Rd", "Cable", "Both", "Culvert", ""],
  ["108", "3895 Moreland Dixon Rd", "Cable", "Both", "Slope", ""],
  ["110", "4507 Moreland Dixon Road", "Steel", "Both", "Slope", "Extruder"],
  ["", "", "", "", "", ""],
];

const toolButton = "flex size-10 items-center justify-center rounded-sm border border-[#b9b9b9]";

function Arrow({ className, d }: { className: string; d: string }) {
  return (
    <svg viewBox="0 0 10 10" className={className} fill="#9e9e9e" aria-hidden="true">
      <path d={d} />
    </svg>
  );
}

function TablePanel() {
  return (
    <section className="flex min-h-0 flex-1 flex-col bg-white pb-5 pl-5 pr-[18px] pt-[13px]">
      <div className="flex items-end gap-[10px]">
        <div role="tablist" className="flex h-10 flex-1 border-b border-[#d0d0d0] pl-[25px]">
          <button role="tab" aria-selected="true" className="border-b-2 border-black px-[21px] pb-1 text-[18px] text-black">
            SF_Guiderails
          </button>
        </div>
        <button disabled aria-label="Show selected" className={`${toolButton} bg-[#e2e2e2] text-[#929292]`}>
          <ChecklistIcon className="size-[22px]" />
        </button>
        <button disabled aria-label="Clear selection" className={`${toolButton} bg-[#e2e2e2] text-[#929292]`}>
          <ClearSelectionIcon className="size-[22px]" />
        </button>
        <button aria-label="Refresh" className={`${toolButton} bg-white text-[#1f1f1f]`}>
          <RefreshIcon className="size-[22px]" />
        </button>
        <div className="flex items-center gap-[5px]">
          <button aria-label="Show or hide columns" className={`${toolButton} bg-white text-[#1f1f1f]`}>
            <ShowFieldsIcon className="size-[22px]" />
          </button>
          <span className="h-5 w-px bg-[#b9b9b9]" />
          <button aria-label="Actions" className={`${toolButton} bg-white text-[#1f1f1f]`}>
            <GridIcon className="size-6" />
          </button>
        </div>
      </div>
      <div className="mt-[15px] flex min-h-0 flex-1 border-t-2 border-[#dedede]">
        <div className="min-w-0 flex-1 overflow-hidden">
          <table className="w-[1500px] table-fixed border-collapse text-left text-[18px] text-[#444444]">
            <thead>
              <tr className="h-[50px] border-b border-[#efefef]">
                {columns.map((c) => (
                  <th key={c} scope="col" className="w-[250px] border-r border-[#efefef] pb-1.5 pl-4 pr-[21px] font-normal">
                    <span className="flex items-center whitespace-nowrap">
                      {c}
                      <button aria-label={`Sort by ${c}`} className="ml-auto">
                        <svg viewBox="0 0 10 14" className="h-[14px] w-[10px]" fill="#868c98" aria-hidden="true">
                          <path d="M5 0l4.500 6h-9zM5 14L.5 8h9z" />
                        </svg>
                      </button>
                      <button aria-label={`${c} options`} className="ml-4">
                        <svg viewBox="0 0 20 14" className="h-[14px] w-5" fill="#6a6a6a" aria-hidden="true">
                          <circle cx="2.500" cy="8" r="2" />
                          <circle cx="10" cy="8" r="2" />
                          <circle cx="17.500" cy="8" r="2" />
                        </svg>
                      </button>
                    </span>
                  </th>
                ))}
              </tr>
            </thead>
            <tbody>
              {rows.map((r) => (
                <tr key={r[0]} className="h-[51px] border-b border-[#f0f0f0]">
                  {r.map((v, i) => (
                    <td key={i} className="whitespace-nowrap border-r border-[#efefef] pb-2.5 pl-[10px]">
                      {v}
                    </td>
                  ))}
                </tr>
              ))}
            </tbody>
          </table>
        </div>
        <div className="flex w-[21px] flex-col items-center bg-[#f8f8f8] pb-2 pt-2">
          <Arrow className="size-[9px]" d="M5 1l5 7H0z" />
          <span className="mt-[3px] h-[21px] w-[17px] bg-[#9e9e9e]" />
          <Arrow className="mt-auto size-[9px]" d="M5 9l5-7H0z" />
        </div>
      </div>
      <div className="flex h-[21px] items-center bg-[#f8f8f8] pl-2 pr-7">
        <Arrow className="size-[9px]" d="M1 5l7-5v10z" />
        <span className="ml-1 h-[17px] w-[378px] bg-[#9e9e9e]" />
        <Arrow className="ml-auto size-[9px]" d="M9 5L2 0v10z" />
      </div>
    </section>
  );
}

/* ---------- page ---------- */

export default function App() {
  return (
    <div className="flex h-screen min-h-[600px] flex-col bg-[#efefef] font-['Lato',sans-serif]">
      <header className="flex h-24 shrink-0 items-center bg-black pl-[14px] pr-[38px]">
        <Logo className="-mt-0.5 h-[75px] w-[76px]" />
        <h1 className="ml-12 pb-3 text-[32px] text-white">South Frontenac Township Guiderail Tracker</h1>
        <button aria-label="Share" className="ml-auto flex size-[30px] items-center justify-center bg-[#333333] text-black">
          <ShareIcon className="size-[29px]" />
        </button>
      </header>
      <main className="flex min-h-0 flex-1 pl-1.5 pt-[10px]">
        <EditorPanel />
        <div className="mx-9 flex shrink-0 gap-1 px-px">
          <span className="w-[3px] bg-[#1c1c1c]" />
          <span className="w-[5px] bg-[#1c1c1c]" />
        </div>
        <FilterPanel />
        <div className="ml-[10px] flex min-w-0 flex-1 flex-col gap-[10px] pb-0.5">
          <div className="flex h-[521px] shrink-0 gap-[10px]">
            <MapView />
            <ChartPanel />
          </div>
          <TablePanel />
        </div>
      </main>
    </div>
  );
}
